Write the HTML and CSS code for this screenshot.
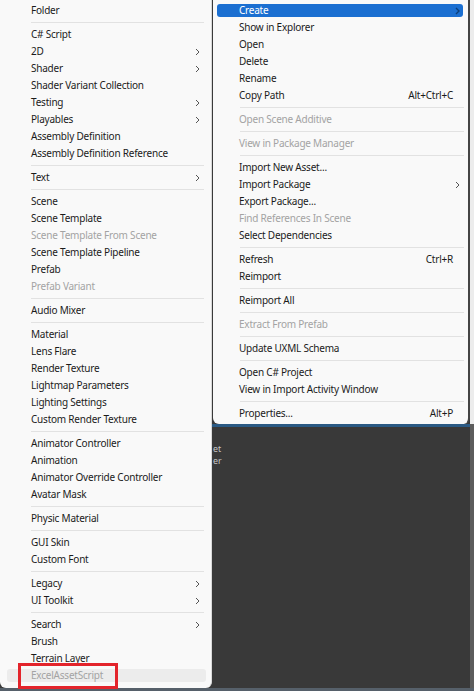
FILE: index.html
```html
<!DOCTYPE html>
<html>
<head>
<meta charset="utf-8">
<link rel="stylesheet" href="styles.css">
</head>
<body>
<div class="editor">
  <div class="main">
    <div class="behind"></div>
    <div class="selbar"></div>
    <div class="assets">
      <div class="asset">et</div>
      <div class="asset">er</div>
    </div>
  </div>
  <div class="edge">
    <div class="edge-top"></div>
    <div class="edge-bottom"></div>
  </div>
</div>
<div class="footer-line"></div>

<div class="menu menu-left">
  <div class="item">Folder</div>
  <div class="sep"></div>
  <div class="item">C# Script</div>
  <div class="item sub"><span class="label">2D</span><svg class="chev" viewBox="0 0 5 8"><polyline points="1,1 4,4 1,7"/></svg></div>
  <div class="item sub"><span class="label">Shader</span><svg class="chev" viewBox="0 0 5 8"><polyline points="1,1 4,4 1,7"/></svg></div>
  <div class="item">Shader Variant Collection</div>
  <div class="item sub"><span class="label">Testing</span><svg class="chev" viewBox="0 0 5 8"><polyline points="1,1 4,4 1,7"/></svg></div>
  <div class="item sub"><span class="label">Playables</span><svg class="chev" viewBox="0 0 5 8"><polyline points="1,1 4,4 1,7"/></svg></div>
  <div class="item">Assembly Definition</div>
  <div class="item">Assembly Definition Reference</div>
  <div class="sep"></div>
  <div class="item sub"><span class="label">Text</span><svg class="chev" viewBox="0 0 5 8"><polyline points="1,1 4,4 1,7"/></svg></div>
  <div class="sep"></div>
  <div class="item">Scene</div>
  <div class="item">Scene Template</div>
  <div class="item disabled">Scene Template From Scene</div>
  <div class="item">Scene Template Pipeline</div>
  <div class="item">Prefab</div>
  <div class="item disabled">Prefab Variant</div>
  <div class="sep"></div>
  <div class="item">Audio Mixer</div>
  <div class="sep"></div>
  <div class="item">Material</div>
  <div class="item">Lens Flare</div>
  <div class="item">Render Texture</div>
  <div class="item">Lightmap Parameters</div>
  <div class="item">Lighting Settings</div>
  <div class="item">Custom Render Texture</div>
  <div class="sep"></div>
  <div class="item">Animator Controller</div>
  <div class="item">Animation</div>
  <div class="item">Animator Override Controller</div>
  <div class="item">Avatar Mask</div>
  <div class="sep"></div>
  <div class="item">Physic Material</div>
  <div class="sep"></div>
  <div class="item">GUI Skin</div>
  <div class="item">Custom Font</div>
  <div class="sep"></div>
  <div class="item sub"><span class="label">Legacy</span><svg class="chev" viewBox="0 0 5 8"><polyline points="1,1 4,4 1,7"/></svg></div>
  <div class="item sub"><span class="label">UI Toolkit</span><svg class="chev" viewBox="0 0 5 8"><polyline points="1,1 4,4 1,7"/></svg></div>
  <div class="sep"></div>
  <div class="item sub"><span class="label">Search</span><svg class="chev" viewBox="0 0 5 8"><polyline points="1,1 4,4 1,7"/></svg></div>
  <div class="item">Brush</div>
  <div class="item">Terrain Layer</div>
  <div class="item disabled hover">ExcelAssetScript</div>
</div>

<div class="menu menu-right">
  <div class="item sub active"><span class="label">Create</span><svg class="chev" viewBox="0 0 5 8"><polyline points="1,1 4,4 1,7"/></svg></div>
  <div class="item">Show in Explorer</div>
  <div class="item">Open</div>
  <div class="item">Delete</div>
  <div class="item">Rename</div>
  <div class="item"><span class="label">Copy Path</span><span class="key">Alt+Ctrl+C</span></div>
  <div class="sep"></div>
  <div class="item disabled">Open Scene Additive</div>
  <div class="sep"></div>
  <div class="item disabled">View in Package Manager</div>
  <div class="sep"></div>
  <div class="item">Import New Asset...</div>
  <div class="item sub"><span class="label">Import Package</span><svg class="chev" viewBox="0 0 5 8"><polyline points="1,1 4,4 1,7"/></svg></div>
  <div class="item">Export Package...</div>
  <div class="item disabled">Find References In Scene</div>
  <div class="item">Select Dependencies</div>
  <div class="sep"></div>
  <div class="item"><span class="label">Refresh</span><span class="key">Ctrl+R</span></div>
  <div class="item">Reimport</div>
  <div class="sep"></div>
  <div class="item">Reimport All</div>
  <div class="sep"></div>
  <div class="item disabled">Extract From Prefab</div>
  <div class="sep"></div>
  <div class="item">Update UXML Schema</div>
  <div class="sep"></div>
  <div class="item">Open C# Project</div>
  <div class="item">View in Import Activity Window</div>
  <div class="sep"></div>
  <div class="item"><span class="label">Properties...</span><span class="key">Alt+P</span></div>
</div>

<div class="callout"></div>
</body>
</html>
```

FILE: styles.css
```css
* { box-sizing: border-box; }
html, body {
  margin: 0;
  padding: 0;
}
body {
  width: 474px;
  height: 691px;
  overflow: hidden;
  position: relative;
  background: #393939;
  font-family: "Noto Sans", "Open Sans", sans-serif;
  font-size: 10px;
  letter-spacing: -0.22px;
}

/* background editor */
.editor {
  display: flex;
  height: 688px;
}
.main {
  flex: 1;
  display: flex;
  flex-direction: column;
  background: #393939;
}
.behind {
  height: 424px;
  background: #3a3a3a;
}
.selbar {
  height: 3px;
  background: #2b5a84;
}
.assets {
  margin-left: 213px;
  margin-top: 16px;
  color: #c6c6c6;
  font-size: 8.8px;
  letter-spacing: 0;
}
.asset {
  height: 12px;
  line-height: 12px;
  white-space: nowrap;
}
.edge {
  width: 4px;
  display: flex;
  flex-direction: column;
}
.edge-top {
  height: 424px;
  background: #ececec;
}
.edge-bottom {
  flex: 1;
  background: #5c5c5c;
}
.footer-line {
  height: 3px;
  background: #56606a;
}

/* menus */
.menu {
  position: absolute;
  top: 0;
  background: #f9f9f9;
  color: #1b1b1b;
  padding-top: 2px;
}
.menu-left {
  left: 0;
  width: 212px;
  height: 688px;
  border-right: 1px solid #d9d9d9;
  border-radius: 0 0 6px 6px;
  padding-left: 31px;
  padding-right: 11px;
  z-index: 2;
}
.menu-right {
  left: 213px;
  width: 257px;
  height: 424px;
  border-right: 2px solid #444;
  border-radius: 0 0 6px 6px;
  padding-left: 26px;
  padding-right: 8px;
  z-index: 1;
}
.item {
  height: 17px;
  line-height: 17px;
  display: flex;
  align-items: center;
  white-space: nowrap;
}
.label {
  flex: 1;
}
.disabled {
  color: #a3a3a3;
}
.key {
  margin-right: 7px;
}
.chev {
  width: 5px;
  height: 8px;
  fill: none;
  stroke: #555;
  stroke-width: 1;
}
.sep {
  height: 7px;
  display: flex;
  align-items: center;
}
.sep::before {
  content: "";
  flex: 1;
  height: 1px;
  background: #e2e2e2;
}
.menu-left .sep { margin-right: -4px; }
.menu-right .sep { margin-left: 1px; margin-right: -4px; }

.item.active {
  height: 13px;
  margin: 2px -3px 2px -22px;
  padding-left: 22px;
  padding-right: 3px;
  border-radius: 3px;
  background: #1b6fd1;
  color: #ffffff;
}
.item.active .chev {
  stroke: #0d3f7a;
  stroke-width: 1.4;
}
.item.hover {
  height: 13px;
  margin: 2px -6px 2px -24px;
  padding-left: 24px;
  border-radius: 3px;
  background: #ececec;
}

.callout {
  position: absolute;
  left: 18px;
  top: 663px;
  width: 100px;
  height: 26px;
  border: 3px solid #e3242b;
  z-index: 3;
}
```
